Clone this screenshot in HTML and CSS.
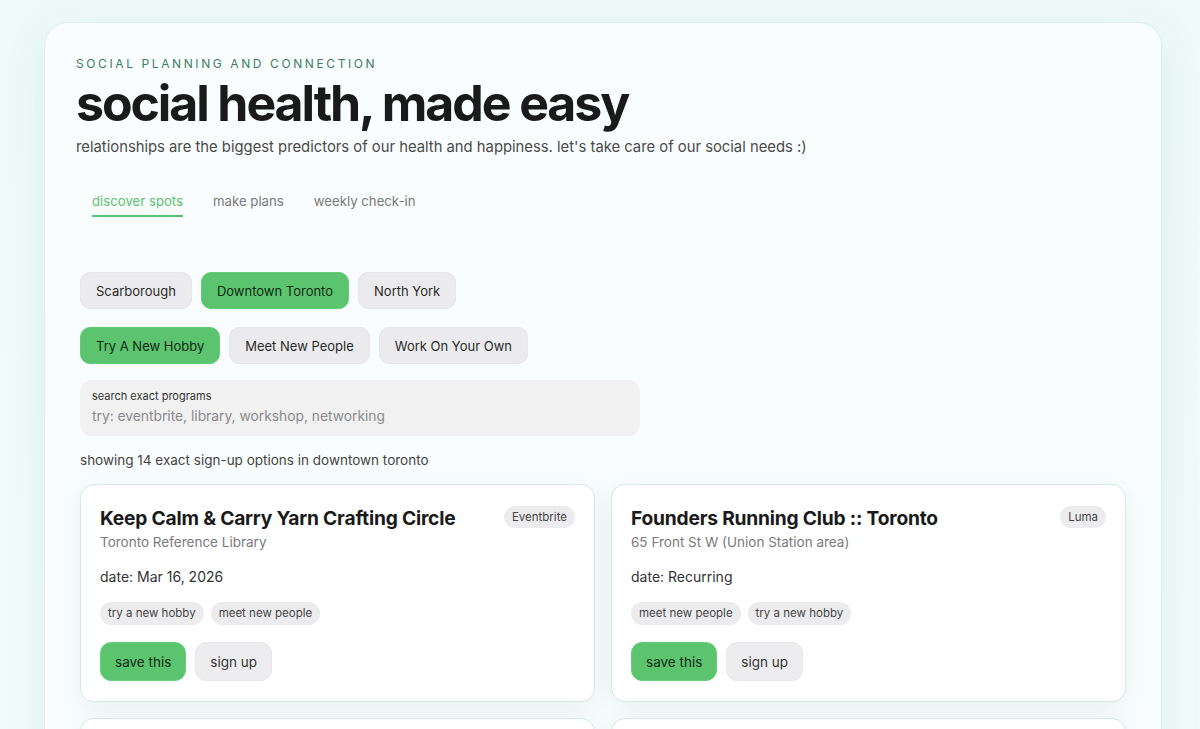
FILE: index.html
```html
<!DOCTYPE html>
<html lang="en">
<head>
<meta charset="utf-8">
<title>social health, made easy</title>
<link rel="stylesheet" href="styles.css">
</head>
<body>
<main class="panel">
  <header class="hero">
    <p class="eyebrow">SOCIAL PLANNING AND CONNECTION</p>
    <h1 class="title">social health, made easy</h1>
    <p class="lede">relationships are the biggest predictors of our health and happiness. let's take care of our social needs :)</p>
  </header>

  <nav class="tabs">
    <span class="tab active">discover spots</span>
    <span class="tab">make plans</span>
    <span class="tab">weekly check-in</span>
  </nav>

  <section class="discover">
    <div class="chips">
      <button class="chip">Scarborough</button>
      <button class="chip on">Downtown Toronto</button>
      <button class="chip">North York</button>
    </div>
    <div class="chips">
      <button class="chip on">Try A New Hobby</button>
      <button class="chip">Meet New People</button>
      <button class="chip">Work On Your Own</button>
    </div>

    <label class="search">
      <span class="search-label">search exact programs</span>
      <input class="search-input" type="text" placeholder="try: eventbrite, library, workshop, networking">
    </label>

    <p class="count">showing 14 exact sign-up options in downtown toronto</p>

    <div class="grid">
      <article class="card">
        <div class="card-head">
          <div>
            <h2 class="card-title">Keep Calm &amp; Carry Yarn Crafting Circle</h2>
            <p class="card-place">Toronto Reference Library</p>
          </div>
          <span class="badge">Eventbrite</span>
        </div>
        <p class="card-date">date: Mar 16, 2026</p>
        <div class="tags">
          <span class="tag">try a new hobby</span>
          <span class="tag">meet new people</span>
        </div>
        <div class="actions">
          <button class="btn save">save this</button>
          <button class="btn">sign up</button>
        </div>
      </article>

      <article class="card">
        <div class="card-head">
          <div>
            <h2 class="card-title">Founders Running Club :: Toronto</h2>
            <p class="card-place">65 Front St W (Union Station area)</p>
          </div>
          <span class="badge">Luma</span>
        </div>
        <p class="card-date">date: Recurring</p>
        <div class="tags">
          <span class="tag">meet new people</span>
          <span class="tag">try a new hobby</span>
        </div>
        <div class="actions">
          <button class="btn save">save this</button>
          <button class="btn">sign up</button>
        </div>
      </article>

      <article class="card card-peek"></article>
      <article class="card card-peek"></article>
    </div>
  </section>
</main>
</body>
</html>
```

FILE: styles.css
```css
* { box-sizing: border-box; }

html, body {
  margin: 0;
  height: 100%;
}

body {
  background: linear-gradient(180deg, #eefaf9 0%, #f1fbfa 100%);
  font-family: "Inter", "Liberation Sans", sans-serif;
  color: #1d1d1f;
  padding: 22px 38px 0 44px;
  overflow: hidden;
}

.panel {
  background: #f9fdfd;
  border: 1px solid #dcf1ec;
  border-radius: 24px;
  box-shadow: 0 10px 40px rgba(90, 150, 140, 0.12);
  padding: 32px 32px 40px 31px;
}

.hero p, .hero h1 { margin: 0; }

.eyebrow {
  font-size: 12px;
  letter-spacing: 2.6px;
  color: #3d7d63;
  line-height: 18px;
}

.title {
  font-size: 50px;
  font-weight: 700;
  letter-spacing: -2.1px;
  line-height: 58px;
  color: #1a1a1a;
  margin-top: 1px !important;
}

.lede {
  font-size: 14.8px;
  color: #4a4a4a;
  line-height: 22px;
  margin-top: 4px !important;
}

.tabs {
  display: flex;
  gap: 30px;
  padding-left: 16px;
  margin-top: 34px;
}

.tab {
  font-size: 13.2px;
  color: #7a7a7a;
  padding-bottom: 5px;
  border-bottom: 2px solid transparent;
  line-height: 18px;
}

.tab.active {
  color: #5cc270;
  border-bottom-color: #5cc270;
}

.discover {
  padding: 0 3px 0 4px;
  margin-top: 55px;
}

.chips {
  display: flex;
  gap: 9px;
  margin-bottom: 18px;
}

.chip {
  font-family: inherit;
  font-size: 13px;
  color: #2a2a2a;
  background: #ebebed;
  border: 1px solid #e6e6e8;
  border-radius: 10px;
  height: 37px;
  padding: 0 15px;
  cursor: pointer;
}

.chip.on {
  background: #5cc46f;
  border-color: #62cc75;
  color: #102a14;
}

.search {
  display: flex;
  flex-direction: column;
  background: #f1f1f2;
  border-radius: 12px;
  width: 560px;
  padding: 9px 12px 11px;
  margin-top: -2px;
}

.search-label {
  font-size: 11px;
  color: #333;
  line-height: 14px;
}

.search-input {
  border: 0;
  background: transparent;
  font-family: inherit;
  font-size: 13.8px;
  color: #333;
  padding: 0;
  margin-top: 4px;
  line-height: 18px;
  outline: none;
}

.search-input::placeholder { color: #8a8a8c; }

.count {
  font-size: 13.5px;
  color: #444;
  margin: 16px 0 16px;
  line-height: 16px;
}

.grid {
  display: grid;
  grid-template-columns: 1fr 1fr;
  gap: 16px;
}

.card {
  background: #ffffff;
  border: 1px solid #d3ebe4;
  border-radius: 14px;
  box-shadow: 0 6px 24px rgba(80, 140, 130, 0.10);
  padding: 20px 19px;
  min-height: 215px;
}

.card-head {
  display: flex;
  justify-content: space-between;
  align-items: flex-start;
  gap: 12px;
}

.card-title {
  font-size: 19.2px;
  font-weight: 700;
  letter-spacing: -0.2px;
  line-height: 26px;
  margin: 0;
  color: #1a1a1a;
}

.card-place {
  font-size: 13.5px;
  color: #7a7a7c;
  margin: 2px 0 0;
  line-height: 18px;
}

.badge {
  font-size: 11.5px;
  color: #444;
  background: #ececee;
  border-radius: 999px;
  padding: 4px 8px;
  line-height: 14px;
  margin-top: 1px;
  white-space: nowrap;
}

.card-date {
  font-size: 14px;
  color: #333;
  margin: 17px 0 0;
  line-height: 18px;
}

.tags {
  display: flex;
  gap: 7px;
  margin-top: 16px;
}

.tag {
  font-size: 11.5px;
  color: #444;
  background: #ececee;
  border-radius: 999px;
  padding: 4px 8px;
  line-height: 15px;
}

.actions {
  display: flex;
  gap: 9px;
  margin-top: 17px;
}

.btn {
  font-family: inherit;
  font-size: 13.5px;
  color: #333;
  background: #ededef;
  border: 1px solid #e8e8ea;
  border-radius: 11px;
  height: 39px;
  padding: 0 14px;
  cursor: pointer;
}

.btn.save {
  background: #5cc46f;
  border-color: #66d079;
  color: #0f2a13;
}
```
